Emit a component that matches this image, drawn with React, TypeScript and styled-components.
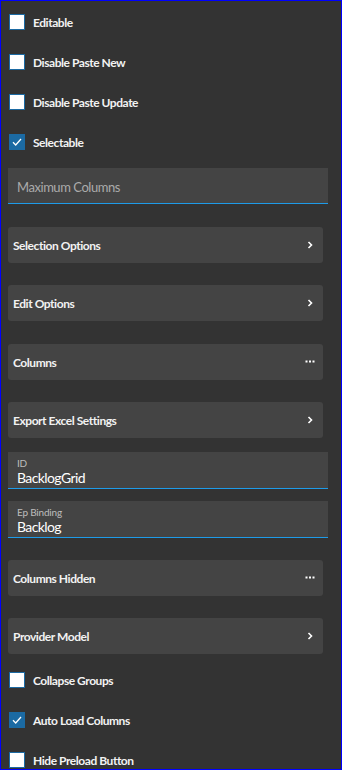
import React from "react";
import styled, { createGlobalStyle } from "styled-components";

const Global = createGlobalStyle`
  html, body { margin: 0; padding: 0; background: #333333; }
  * { box-sizing: border-box; }
`;

const Panel = styled.div`
  width: 342px;
  height: 770px;
  border: 1px solid #0000ff;
  background: #333333;
  overflow: hidden;
  display: flex;
  flex-direction: column;
  padding: 1px 13px 0 7px;
  font-family: "Lato", "Noto Sans", sans-serif;
  color: #ffffff;
`;

const CheckRow = styled.label<{ $mt?: number }>`
  height: 40px;
  flex: none;
  display: flex;
  align-items: center;
  gap: 8px;
  padding-left: 1px;
  margin-top: ${(p) => p.$mt ?? 0}px;
  font-size: 12px;
  font-weight: 700;
  letter-spacing: -0.45px;
  color: #f2f2f2;
`;

const Box = styled.span<{ $checked?: boolean }>`
  width: 16px;
  height: 16px;
  flex: none;
  border: 1px solid #1b6aa3;
  background: ${(p) => (p.$checked ? "#1b6aa3" : "#ffffff")};
  display: flex;
  align-items: center;
  justify-content: center;
`;

const Field = styled.div<{ $mt?: number; $plain?: boolean }>`
  flex: none;
  width: 320px;
  height: ${(p) => (p.$plain ? 36 : 37)}px;
  margin-top: ${(p) => p.$mt ?? 0}px;
  background: #444444;
  border-bottom: 1px solid #1e9be8;
  display: flex;
  flex-direction: column;
  justify-content: ${(p) => (p.$plain ? "center" : "flex-start")};
  padding: ${(p) => (p.$plain ? "0 0 0 9px" : "5px 0 0 9px")};
`;

const Placeholder = styled.span`
  font-size: 13px;
  font-weight: 400;
  color: #ababab;
  letter-spacing: -0.45px;
  padding-top: 2px;
`;

const FieldLabel = styled.span`
  font-size: 10px;
  line-height: 12px;
  color: #bdbdbd;
  letter-spacing: -0.2px;
`;

const FieldValue = styled.span`
  font-size: 14px;
  line-height: 17px;
  color: #ffffff;
  letter-spacing: -0.6px;
`;

const Card = styled.div<{ $mt?: number }>`
  flex: none;
  width: 315px;
  height: 36px;
  margin-top: ${(p) => p.$mt ?? 0}px;
  background: #444444;
  border-radius: 3px;
  display: flex;
  align-items: center;
  justify-content: space-between;
  padding: 0 8px 0 5px;
  font-size: 12px;
  font-weight: 700;
  letter-spacing: -0.45px;
  color: #f2f2f2;
`;

const Icon = styled.span`
  width: 10px;
  display: flex;
  align-items: center;
  justify-content: center;
`;

const Check = () => (
  <svg width="12" height="12" viewBox="0 0 12 12">
    <path d="M2 6.3 L4.7 9 L10 3" fill="none" stroke="#ffffff" strokeWidth="1.3" />
  </svg>
);

const Chevron = () => (
  <svg width="6" height="8" viewBox="0 0 6 8">
    <path d="M1.5 1 L4.5 4 L1.5 7" fill="none" stroke="#ffffff" strokeWidth="1.6" />
  </svg>
);

const Dots = () => (
  <svg width="10" height="4" viewBox="0 0 10 4">
    <rect x="0.5" y="0.5" width="2" height="2" fill="#fff" />
    <rect x="4" y="0.5" width="2" height="2" fill="#fff" />
    <rect x="7.5" y="0.5" width="2" height="2" fill="#fff" />
  </svg>
);

const CheckItem = ({ label, checked, mt }: { label: string; checked?: boolean; mt?: number }) => (
  <CheckRow $mt={mt}>
    <Box $checked={checked}>{checked && <Check />}</Box>
    <span>{label}</span>
  </CheckRow>
);

const Group = ({ label, mt, kind }: { label: string; mt: number; kind: "chevron" | "dots" }) => (
  <Card $mt={mt}>
    <span>{label}</span>
    <Icon>{kind === "chevron" ? <Chevron /> : <Dots />}</Icon>
  </Card>
);

export default function App() {
  return (
    <>
      <Global />
      <Panel>
        <CheckItem label="Editable" />
        <CheckItem label="Disable Paste New" />
        <CheckItem label="Disable Paste Update" />
        <CheckItem label="Selectable" checked />
        <Field $plain $mt={6}>
          <Placeholder>Maximum Columns</Placeholder>
        </Field>
        <Group label="Selection Options" mt={23} kind="chevron" />
        <Group label="Edit Options" mt={22} kind="chevron" />
        <Group label="Columns" mt={23} kind="dots" />
        <Group label="Export Excel Settings" mt={22} kind="chevron" />
        <Field $mt={14}>
          <FieldLabel>ID</FieldLabel>
          <FieldValue>BacklogGrid</FieldValue>
        </Field>
        <Field $mt={12}>
          <FieldLabel>Ep Binding</FieldLabel>
          <FieldValue>Backlog</FieldValue>
        </Field>
        <Group label="Columns Hidden" mt={22} kind="dots" />
        <Group label="Provider Model" mt={22} kind="chevron" />
        <CheckItem label="Collapse Groups" mt={6} />
        <CheckItem label="Auto Load Columns" checked />
        <CheckItem label="Hide Preload Button" />
      </Panel>
    </>
  );
}
